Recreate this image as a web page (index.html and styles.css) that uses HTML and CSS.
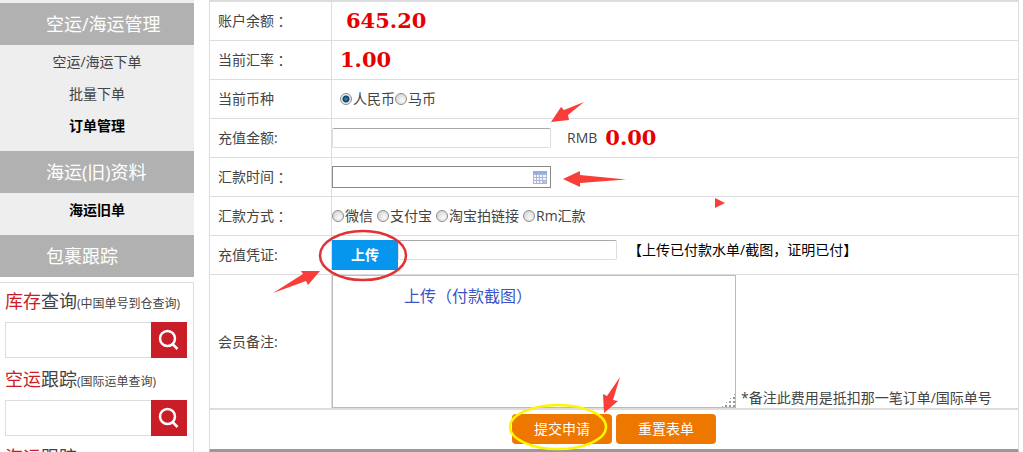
FILE: index.html
```html
<!DOCTYPE html>
<html lang="zh-CN">
<head>
<meta charset="utf-8">
<title>账户充值</title>
<link rel="stylesheet" href="styles.css">
</head>
<body>
<div class="page">
  <aside class="sidebar">
    <nav class="menu">
      <h2 class="menu-title">空运/海运管理</h2>
      <ul class="menu-list">
        <li><a href="#">空运/海运下单</a></li>
        <li><a href="#">批量下单</a></li>
        <li><a href="#" class="strong">订单管理</a></li>
      </ul>
      <h2 class="menu-title">海运(旧)资料</h2>
      <ul class="menu-list">
        <li><a href="#" class="strong">海运旧单</a></li>
      </ul>
      <h2 class="menu-title">包裹跟踪</h2>
    </nav>
    <div class="queries">
      <form class="query">
        <label class="query-title" for="q1"><span class="red">库存</span>查询<small>(中国单号到仓查询)</small></label>
        <div class="query-row"><input type="text" id="q1"><button type="button" aria-label="查询库存"><svg width="24" height="24" viewBox="0 0 24 24"><circle cx="10.500" cy="10.500" r="7.500"/><path d="M15.500 16L20.500 21"/></svg></button></div>
      </form>
      <form class="query">
        <label class="query-title" for="q2"><span class="red">空运</span>跟踪<small>(国际运单查询)</small></label>
        <div class="query-row"><input type="text" id="q2"><button type="button" aria-label="查询空运"><svg width="24" height="24" viewBox="0 0 24 24"><circle cx="10.500" cy="10.500" r="7.500"/><path d="M15.500 16L20.500 21"/></svg></button></div>
      </form>
      <form class="query">
        <label class="query-title" for="q3"><span class="red">海运</span>跟踪</label>
        <div class="query-row"><input type="text" id="q3"><button type="button" aria-label="查询海运"><svg width="24" height="24" viewBox="0 0 24 24"><circle cx="10.500" cy="10.500" r="7.500"/><path d="M15.500 16L20.500 21"/></svg></button></div>
      </form>
    </div>
  </aside>

  <form class="recharge">
    <div class="row"><div class="name">账户余额<span class="mid" lang="zh-TW">：</span></div><div class="value"><strong class="amount wide">645.20</strong></div></div>
    <div class="row"><div class="name">当前汇率<span class="mid" lang="zh-TW">：</span></div><div class="value"><strong class="amount">1.00</strong></div></div>
    <div class="row"><div class="name">当前币种</div><div class="value padded">
      <label class="choice"><input type="radio" name="currency" checked>人民币</label><label class="choice"><input type="radio" name="currency">马币</label></div></div>
    <div class="row"><label class="name" for="sum">充值金额:</label><div class="value"><input class="field" type="text" id="sum"><span class="unit">RMB</span><strong class="amount">0.00</strong></div></div>
    <div class="row"><label class="name" for="date">汇款时间<span class="mid" lang="zh-TW">：</span></label><div class="value">
      <div class="date"><input type="text" id="date"><svg width="14" height="13" viewBox="0 0 14 13"><rect width="14" height="13" fill="#a9b8d8"/><rect width="14" height="3" fill="#8fb0e4"/><path d="M1 4h2v2H1zM4 4h2v2H4zM7 4h2v2H7zM10 4h3v2h-3zM1 7h2v2H1zM4 7h2v2H4zM7 7h2v2H7zM10 7h3v2h-3zM1 10h2v2H1zM4 10h2v2H4zM7 10h2v2H7z" fill="#f4f6fb"/><path d="M10 10h3v2h-3z" fill="#d9b9b4"/></svg></div></div></div>
    <div class="row"><div class="name">汇款方式<span class="mid" lang="zh-TW">：</span></div><div class="value spaced">
      <label class="choice"><input type="radio" name="method">微信</label>
      <label class="choice"><input type="radio" name="method">支付宝</label>
      <label class="choice"><input type="radio" name="method">淘宝拍链接</label>
      <label class="choice"><input type="radio" name="method">Rm汇款</label></div></div>
    <div class="row"><label class="name" for="proof">充值凭证:</label><div class="value top"><button type="button" class="upload">上传</button><input class="field file" type="text" id="proof"><span class="hint">【上传已付款水单/截图，证明已付】</span></div></div>
    <div class="row tall"><label class="name" for="memo">会员备注:</label><div class="value bottom"><textarea id="memo"></textarea><span class="note">*备注此费用是抵扣那一笔订单/国际单号</span><span class="callout">上传（付款截图）</span></div></div>
    <div class="actions"><button type="submit">提交申请</button><button type="reset">重置表单</button></div>
  </form>

  <svg class="marks" width="1023" height="452" viewBox="0 0 1023 452" aria-hidden="true">
    <g fill="#f93d39">
      <path d="M551 122L561 107L564 110L584 102L568 115L569 120Z"/>
      <path d="M563 179L580 171L580 175L626 179.500L580 183L580 187Z"/>
      <path d="M715 198L725 203L715 208Z"/>
      <path d="M273 293L303 274L301 271L320 271L308 285L306 281Z"/>
      <path d="M604 413L603 394L607 396L620 377L613 400L618 401Z"/>
    </g>
    <ellipse cx="363" cy="255.500" rx="43" ry="24.500" fill="none" stroke="#df3336" stroke-width="2.500"/>
    <ellipse cx="558" cy="427" rx="48" ry="22" fill="none" stroke="#fff500" stroke-width="2.500"/>
  </svg>
</div>
</body>
</html>
```
FILE: styles.css
```css
* { box-sizing: border-box; }
body {
  margin: 0;
  height: 100vh;
  overflow: hidden;
  background: #fff;
  color: #444;
  font: 14px/20px "Open Sans", "Noto Sans CJK SC", sans-serif;
}
input, button, textarea { font: inherit; margin: 0; padding: 0; border-radius: 0; }
.page { position: relative; display: flex; align-items: flex-start; gap: 15px; padding-right: 4px; }

.sidebar { flex: 0 0 194px; min-width: 0; }
.menu { background: #eee; padding-top: 3px; }
.menu-title {
  margin: 0;
  padding-left: 46px;
  background: #b1b1b1;
  color: #fff;
  font-size: 18px;
  font-weight: 400;
  line-height: 42px;
}
.menu-list { list-style: none; margin: 0; padding: 1px 0 9px; text-align: center; line-height: 32px; }
.menu-list a { color: #444; text-decoration: none; }
.menu-list .strong { color: #000; font-weight: 700; }

.queries { margin-top: 5px; border: 1px solid #ddd; border-left: 0; padding: 0 6px 0 5px; }
.query-title { display: block; height: 36px; font-size: 18px; line-height: 36px; white-space: nowrap; }
.query-title small { font-size: 12px; line-height: 1; }
.red { color: #c91d27; }
.query-row { display: flex; margin: 3px 0; }
.query-row input { flex: 1; width: 0; min-width: 0; height: 36px; border: 1px solid #ddd; border-right: 0; }
.query-row button { display: grid; place-items: center; flex: none; width: 36px; height: 36px; border: 0; background: #c91d27; }
.query-row svg { fill: none; stroke: #fff; stroke-width: 2.5; }

.recharge {
  flex: 1;
  min-width: 0;
  border: 1px solid #ddd;
  border-top-width: 2px;
  border-bottom: 4px solid #999;
}
.row { display: flex; height: 39px; border-bottom: 1px solid #ddd; }
.name { flex: 0 0 122px; display: flex; align-items: center; padding-left: 8px; border-right: 1px solid #ddd; }
.mid { font-family: "Noto Sans CJK TC", sans-serif; }
.value { flex: 1; min-width: 0; display: flex; align-items: center; position: relative; white-space: nowrap; }
.padded { padding-left: 8px; }
.spaced { gap: 4px; }
.amount { margin-left: 8px; color: #e60000; font: 700 21px/24px "DejaVu Serif", serif; }
.wide { margin-left: 14px; }
.choice { display: flex; align-items: center; }
.choice input {
  appearance: none;
  width: 12px;
  height: 12px;
  margin-right: 1px;
  border: 1px solid #8c8c8c;
  border-radius: 50%;
  background: radial-gradient(circle at 65% 65%, #fafafa, #ccc);
}
.choice input:checked { background: radial-gradient(circle, #3b92c4 0, #123c60 3px, #eee 4px); }
.field { width: 219px; height: 20px; border: 1px solid #ddd; border-top-color: #aaa; border-radius: 2px; }
.unit { margin-left: 16px; }
.date { display: flex; align-items: center; width: 219px; height: 22px; padding-right: 3px; border: 1px solid #888; }
.date input { flex: 1; min-width: 0; border: 0; outline: 0; }
.top { align-items: flex-start; padding-top: 4px; }
.upload { width: 66px; height: 30px; border: 0; background: #0796ed; color: #fff; font-weight: 700; }
.hint { margin-left: 11px; color: #000; }
.tall { height: 135px; border-bottom-width: 2px; }
.bottom { align-items: flex-end; }
textarea { flex: none; width: 404px; height: 133px; border: 1px solid #bbb; resize: both; }
textarea::-webkit-resizer {
  background:
    linear-gradient(135deg, #fff 55%, transparent 0),
    radial-gradient(circle, #999 1px, transparent 1px) 0 0 / 4px 4px;
}
.note { margin-left: 5px; }
.callout { position: absolute; left: 72px; top: 11px; color: #3b55c8; font-size: 16px; }
.actions { display: flex; justify-content: center; gap: 4px; padding: 4px 0 5px; }
.actions button { width: 100px; height: 30px; border: 0; border-radius: 4px; background: #ee7700; color: #fff; }
.marks { position: absolute; left: 0; top: 0; pointer-events: none; }
```
